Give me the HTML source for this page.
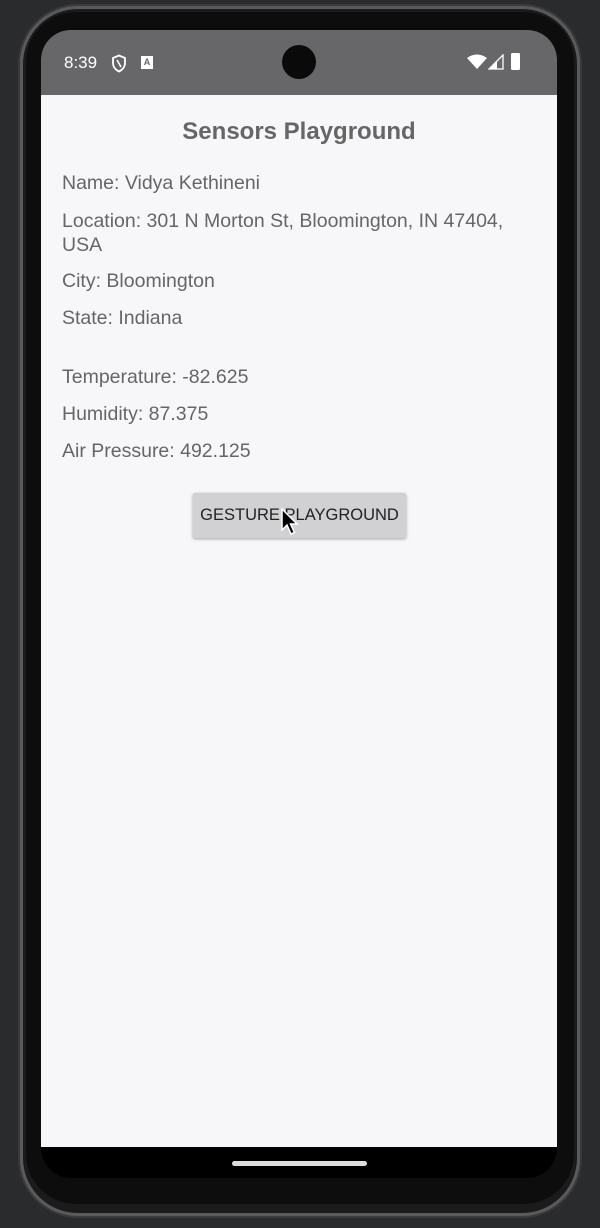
<!DOCTYPE html>
<html><head><style>
*{margin:0;padding:0;box-sizing:border-box}
body{width:600px;height:1228px;background:#2a2b2d;position:relative;overflow:hidden;font-family:"Liberation Sans",sans-serif}
.frame{position:absolute;left:20px;top:6px;width:560px;height:1210px;border-radius:58px;background:#1b1b1c;border:3px solid #5a5a5c;box-shadow:0 0 0 2px #3a3a3c}
.inner{position:absolute;left:26px;top:12px;width:548px;height:1192px;border-radius:50px;background:#0d0d0e}
.screen{position:absolute;left:41px;top:30px;width:516px;height:1148px;border-radius:30px;overflow:hidden;background:#000}
.sb{position:absolute;left:0;top:0;width:516px;height:65px;background:#676669}
.content{position:absolute;left:0;top:65px;width:516px;height:1052px;background:#f7f6f8;color:#666}
.t{position:absolute;left:21px;font-size:19.5px}
.btn{position:absolute;left:152px;top:398px;width:213px;height:45px;background:#d1d0d2;box-shadow:0 1px 3px rgba(0,0,0,.35);border-radius:2px;font-size:16.5px;color:#222;text-align:center;line-height:45px}
.home{position:absolute;left:232px;top:1161px;width:135px;height:5px;border-radius:3px;background:#ddd}
</style></head><body>
<div class="frame"></div>
<div class="inner"></div>
<div class="screen">
 <div class="sb">
  <div style="position:absolute;left:23px;top:23px;color:#fff;font-size:17px">8:39</div>
  <svg style="position:absolute;left:70px;top:24px" width="16" height="19" viewBox="0 0 16 19"><path d="M8 1.5L2 4v5c0 4 2.8 7 6 8.5 3.2-1.5 6-4.5 6-8.5V4z" fill="none" stroke="#fff" stroke-width="1.8"/><path d="M6 6l4 7" stroke="#fff" stroke-width="1.6"/></svg>
  <div style="position:absolute;left:100px;top:26px;width:12px;height:13px;background:#fff;color:#676669;font-size:9px;font-weight:bold;text-align:center;line-height:12px">A</div>
  <div style="position:absolute;left:241px;top:15px;width:34px;height:34px;border-radius:50%;background:#0a0a0a"></div>
  <svg style="position:absolute;left:426px;top:24px" width="20" height="16" viewBox="0 0 20 16"><path d="M0 4Q10-3 20 4L10 15z" fill="#fff"/></svg>
  <svg style="position:absolute;left:447px;top:24px" width="16" height="16" viewBox="0 0 16 16"><path d="M15 1V15H1z" fill="none" stroke="#fff" stroke-width="1.3"/><path d="M9 7V15H1z" fill="#fff"/></svg>
  <div style="position:absolute;left:470px;top:23px;width:9px;height:17px;background:#fff;border-radius:1.5px"></div>
 </div>
 <div class="content">
  <div style="position:absolute;left:0;width:516px;top:23px;text-align:center;font-size:24px;font-weight:bold;color:#666">Sensors Playground</div>
  <div class="t" style="top:77px">Name: Vidya Kethineni</div>
  <div class="t" style="top:114px;line-height:24px;width:480px">Location: 301 N Morton St, Bloomington, IN 47404, USA</div>
  <div class="t" style="top:175px">City: Bloomington</div>
  <div class="t" style="top:212px">State: Indiana</div>
  <div class="t" style="top:271px">Temperature: -82.625</div>
  <div class="t" style="top:308px">Humidity: 87.375</div>
  <div class="t" style="top:345px">Air Pressure: 492.125</div>
  <div class="btn">GESTURE PLAYGROUND</div>
  <svg style="position:absolute;left:240px;top:413px" width="20" height="28" viewBox="0 0 20 28"><path d="M1 1V22L6 17L10 26L13.5 24.5L9.5 16H16z" fill="#000" stroke="#fff" stroke-width="1.5"/></svg>
 </div>
</div>
<div class="home"></div>
</body></html>
